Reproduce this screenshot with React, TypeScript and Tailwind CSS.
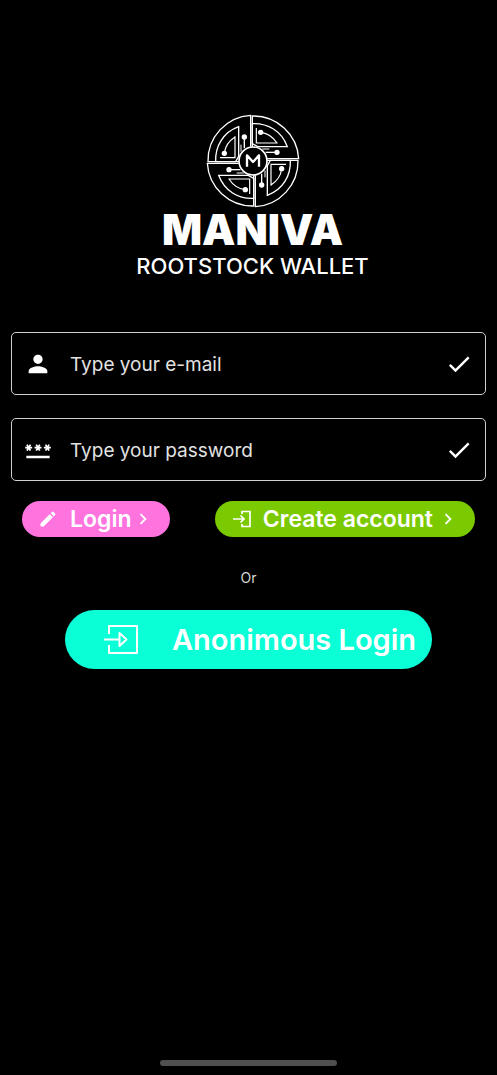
import React from "react";
import { MdCheck, MdChevronRight, MdEdit, MdPassword, MdPerson } from "react-icons/md";

function Quadrant({ angle }: { angle: number }) {
  return (
    <g transform={`rotate(${angle} 171 165)`}>
      <path d="M164 122V28A136 136 0 0 0 36 167H129" />
      <path d="M128 62V151L119 167H59C57 121 81 79 128 62Z" />
      <path d="M117 91V155H72M117 93Q89 111 85 141" strokeWidth="3.5" />
      <path d="M145 93V127" />
      <path d="M135 116V137" strokeWidth="3" />
      <circle cx="85" cy="142" r="6" fill="white" />
      <circle cx="145" cy="93" r="6" fill="white" />
    </g>
  );
}

function Emblem() {
  return (
    <svg viewBox="0 0 342 330" className="h-[110px] w-[114px]" fill="none" stroke="white" strokeWidth="4" aria-hidden="true">
      <Quadrant angle={0} />
      <Quadrant angle={90} />
      <Quadrant angle={180} />
      <Quadrant angle={270} />
      <circle cx="171" cy="165" r="42" fill="black" strokeWidth="5" />
      <path d="M153 182V148L171 168L189 148V182" strokeWidth="7" strokeLinejoin="round" />
    </svg>
  );
}

function EnterIcon() {
  return (
    <svg viewBox="0 0 18 18" className="size-[18px] shrink-0" fill="none" stroke="currentColor" strokeWidth="1.7" aria-hidden="true">
      <path d="M9 4V1.5H17V16.5H9V14M0 9H11M7.5 5.5L11 9L7.5 12.5" />
    </svg>
  );
}

function AnonymousIcon() {
  return (
    <svg viewBox="0 0 34 30" className="h-[30px] w-[34px] shrink-0" fill="none" stroke="currentColor" strokeWidth="2" strokeLinejoin="round" aria-hidden="true">
      <path d="M5 9V1H33V28H5V20M0 14.5H15.5M15.5 8L22.5 14.5L15.5 21Z" />
    </svg>
  );
}

type FieldProps = {
  id: string;
  label: string;
  type: string;
  icon: React.ReactNode;
};

function Field({ id, label, type, icon }: FieldProps) {
  return (
    <div className="flex h-[63px] items-center rounded-[5px] border border-[#d0d0d0] px-3">
      <label htmlFor={id} aria-label={label} className="mr-[18px] shrink-0">
        {icon}
      </label>
      <input
        id={id}
        type={type}
        placeholder={label}
        className="h-full min-w-0 flex-1 bg-transparent pt-0.5 text-[19px] text-white outline-none placeholder:text-[#e2e2e2] placeholder:opacity-100"
      />
      <MdCheck className="size-7 shrink-0" aria-hidden="true" />
    </div>
  );
}

export default function App() {
  return (
    <main className="flex min-h-screen flex-col bg-black px-[11px] pt-[106px] pb-[9px] font-['Inter','Liberation_Sans',sans-serif] text-white">
      <header className="flex flex-col items-center pl-2">
        <Emblem />
        <h1 className="-mt-2 text-[42px] leading-[44px] font-black">MANIVA</h1>
        <p className="mt-0.5 text-[22px] leading-6 font-medium">ROOTSTOCK WALLET</p>
      </header>

      <form className="mt-[54px] flex flex-col" onSubmit={(event) => event.preventDefault()}>
        <div className="flex flex-col gap-[23px]">
          <Field id="email" label="Type your e-mail" type="email" icon={<MdPerson className="size-7" />} />
          <Field id="password" label="Type your password" type="password" icon={<MdPassword className="size-7" />} />
        </div>

        <div className="mt-5 flex justify-between px-[11px]">
          <button type="submit" className="flex h-9 items-center rounded-full bg-[#ff73df] px-4 text-[23px] leading-none font-semibold">
            <MdEdit className="mr-3 size-5" aria-hidden="true" />
            Login
            <MdChevronRight className="size-[22px]" aria-hidden="true" />
          </button>
          <button type="button" className="flex h-9 items-center rounded-full bg-[#7bc900] pr-4 pl-[18px] text-[23px] leading-none font-semibold">
            <EnterIcon />
            <span className="mr-1 ml-3">Create account</span>
            <MdChevronRight className="size-[22px]" aria-hidden="true" />
          </button>
        </div>

        <p className="mt-[31px] text-center text-[14px] leading-5 text-[#d8d8d8]">Or</p>

        <button type="button" className="mt-[22px] flex h-[59px] items-center gap-[34px] self-center rounded-full bg-[#0affd7] pr-4 pl-[39px] text-[29px] leading-none font-semibold">
          <AnonymousIcon />
          Anonimous Login
        </button>
      </form>

      <div className="mt-auto h-1.5 w-[177px] self-center rounded-full bg-[#505050]" />
    </main>
  );
}
